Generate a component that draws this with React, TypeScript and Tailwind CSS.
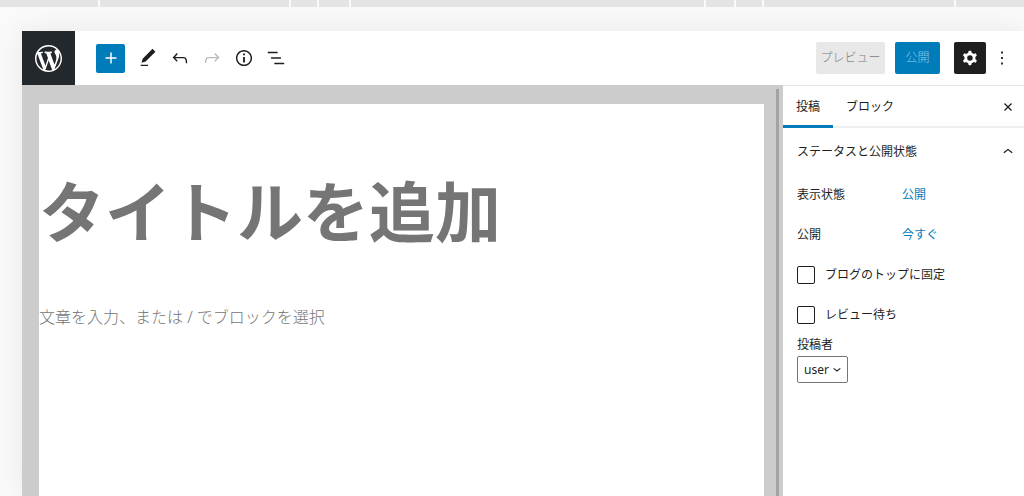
import type { ReactNode } from "react";

function Icon({ d, className = "size-[22px]" }: { d: string; className?: string }) {
  return (
    <svg viewBox="0 0 24 24" className={className} fill="currentColor" fillRule="evenodd" aria-hidden="true">
      <path d={d} />
    </svg>
  );
}

const paths = {
  plus: "M18 11.2h-5.2V6h-1.6v5.2H6v1.6h5.2V18h1.6v-5.2H18z",
  edit: "M20.1 5.1L16.9 2 6.2 12.7l-1.3 4.4 4.5-1.3L20.1 5.1zM4 20.8h8v-1.5H4v1.5z",
  undo: "M18.3 11.7c-.6-.6-1.4-.9-2.3-.9H6.7l2.9-3.3-1.1-1-4.5 5L8.5 16l1-1-2.7-2.7H16c.5 0 .9.2 1.3.5 1 1 1 3.4 1 4.5v.3h1.5v-.2c0-1.5 0-4.3-1.5-5.7z",
  redo: "M15.6 6.5l-1.1 1 2.9 3.3H8c-.9 0-1.7.3-2.3.9-1.4 1.5-1.4 4.2-1.4 5.6v.2h1.5v-.3c0-1.1 0-3.5 1-4.5.3-.3.7-.5 1.3-.5h9.2L14.5 15l1.1 1.1 4.6-4.6-4.6-5z",
  info: "M12 3.2c-4.8 0-8.8 3.9-8.8 8.8 0 4.8 3.9 8.8 8.8 8.8 4.8 0 8.8-3.9 8.8-8.8 0-4.8-4-8.8-8.8-8.8zm0 16c-4 0-7.2-3.3-7.2-7.2C4.8 8 8 4.8 12 4.8s7.2 3.3 7.2 7.2c0 4-3.2 7.2-7.2 7.2zM11 17h2v-6h-2v6zm0-8h2V7h-2v2z",
  list: "M13.8 5.2H3v1.5h10.8V5.2zm-3.6 12v1.5H21v-1.5H10.2zm7.2-6H6.6v1.5h10.8v-1.5z",
  cog: "M10.289 4.836A1 1 0 0111.275 4h1.306a1 1 0 01.987.836l.244 1.466c.787.26 1.503.679 2.108 1.218l1.393-.522a1 1 0 011.216.437l.653 1.13a1 1 0 01-.23 1.273l-1.148.944a6.025 6.025 0 010 2.435l1.149.946a1 1 0 01.23 1.272l-.653 1.13a1 1 0 01-1.216.437l-1.394-.522c-.605.54-1.32.958-2.108 1.218l-.244 1.466a1 1 0 01-.987.836h-1.306a1 1 0 01-.986-.836l-.244-1.466a5.995 5.995 0 01-2.108-1.218l-1.394.522a1 1 0 01-1.217-.436l-.653-1.131a1 1 0 01.23-1.272l1.149-.946a6.026 6.026 0 010-2.435l-1.148-.944a1 1 0 01-.23-1.272l.653-1.131a1 1 0 011.217-.437l1.393.522a5.994 5.994 0 012.108-1.218l.244-1.466zM14.929 12a3 3 0 11-6 0 3 3 0 016 0z",
  more: "M13 19h-2v-2h2v2zm0-6h-2v-2h2v2zm0-6h-2V5h2v2z",
  close: "M12 13.06l3.712 3.713 1.061-1.06L13.061 12l3.712-3.712-1.06-1.06L12 10.938 8.288 7.227l-1.061 1.06L10.939 12l-3.712 3.712 1.06 1.061L12 13.061z",
  chevronUp: "M6.5 12.4L12 8l5.5 4.4-.9 1.2L12 10l-4.5 3.6-1-1.2z",
  chevronDown: "M17.5 11.6L12 16l-5.5-4.4.9-1.2L12 14l4.5-3.6 1 1.2z",
};

function WordPressLogo() {
  return (
    <svg viewBox="0 0 20 20" className="size-[27px]" fill="currentColor" aria-hidden="true">
      <path d="M20 10c0-5.51-4.49-10-10-10C4.48 0 0 4.49 0 10c0 5.52 4.48 10 10 10 5.51 0 10-4.48 10-10zM7.78 15.37L4.37 6.22c.55-.02 1.17-.08 1.17-.08.5-.06.44-1.13-.06-1.11 0 0-1.45.11-2.37.11-.18 0-.37 0-.58-.01C4.12 2.69 6.87 1.11 10 1.11c2.33 0 4.45.87 6.05 2.34-.68-.11-1.65.39-1.65 1.58 0 .74.45 1.36.9 2.1.35.61.55 1.36.55 2.46 0 1.49-1.4 5-1.4 5l-3.03-8.37c.54-.02.82-.17.82-.17.5-.05.44-1.25-.06-1.22 0 0-1.44.12-2.38.12-.87 0-2.33-.12-2.33-.12-.5-.03-.56 1.2-.06 1.22l.92.08 1.26 3.41zM17.41 10c.24-.64.74-1.87.43-4.25.7 1.29 1.05 2.71 1.05 4.25 0 3.29-1.73 6.24-4.4 7.78.97-2.59 1.94-5.2 2.92-7.78zM6.1 18.09C3.12 16.65 1.11 13.53 1.11 10c0-1.3.23-2.48.72-3.59C3.25 10.3 4.67 14.2 6.1 18.09zm4.03-6.63l2.58 6.98c-.86.29-1.76.45-2.71.45-.79 0-1.57-.11-2.29-.33.81-2.38 1.62-4.74 2.42-7.1z" />
    </svg>
  );
}

function ToolButton({ label, d, disabled = false }: { label: string; d: string; disabled?: boolean }) {
  return (
    <button
      type="button"
      aria-label={label}
      disabled={disabled}
      className="flex size-8 items-center justify-center text-[#1e1e1e] disabled:text-[#bbbbbb]"
    >
      <Icon d={d} />
    </button>
  );
}

function SettingRow({ label, value }: { label: string; value: string }) {
  return (
    <div className="flex h-10 items-center">
      <dt className="w-[105px]">{label}</dt>
      <dd>
        <button type="button" className="text-[#007cba]">{value}</button>
      </dd>
    </div>
  );
}

function CheckRow({ children }: { children: ReactNode }) {
  return (
    <label className="flex h-10 items-center gap-[10px]">
      <input type="checkbox" className="size-[18px] appearance-none rounded-xs border border-[#1e1e1e] bg-white" />
      {children}
    </label>
  );
}

function TopStrip() {
  return (
    <div className="flex h-[7px] shrink-0 gap-[2px] bg-[#fafafa]" aria-hidden="true">
      <div className="w-[98px] bg-[#e4e4e4]" />
      <div className="w-[189px] bg-[#e4e4e4]" />
      <div className="w-[26px] bg-[#e4e4e4]" />
      <div className="w-[30px] bg-[#e4e4e4]" />
      <div className="flex-1 bg-[#e4e4e4]" />
      <div className="w-[28px] bg-[#e4e4e4]" />
      <div className="w-[26px] bg-[#e4e4e4]" />
      <div className="w-[190px] bg-[#e4e4e4]" />
      <div className="w-[68px] bg-[#e4e4e4]" />
    </div>
  );
}

function Header() {
  return (
    <header className="flex h-[54px] shrink-0 items-center bg-white">
      <a href="#" aria-label="WordPress" className="flex h-full w-[53px] items-center justify-center bg-[#23282d] text-white">
        <WordPressLogo />
      </a>
      <div className="flex flex-1 items-center pl-[21px]">
        <button type="button" aria-label="ブロックを追加" className="mr-[7px] flex size-[29px] items-center justify-center rounded-xs bg-[#007cba] text-white">
          <Icon d={paths.plus} />
        </button>
        <ToolButton label="ツール" d={paths.edit} />
        <ToolButton label="元に戻す" d={paths.undo} />
        <ToolButton label="やり直し" d={paths.redo} disabled />
        <ToolButton label="詳細" d={paths.info} />
        <ToolButton label="リスト表示" d={paths.list} />
      </div>
      <div className="flex items-center pr-3">
        <button type="button" disabled className="h-8 w-[69px] rounded-xs bg-[#e8e8e8] text-[#7c7c7c]">プレビュー</button>
        <button type="button" disabled className="ml-[10px] h-8 w-[45px] rounded-xs bg-[#007cba] text-[#8cc8e6]">公開</button>
        <button type="button" aria-label="設定" className="ml-[14px] flex size-8 items-center justify-center rounded-xs bg-[#1e1e1e] text-white">
          <Icon d={paths.cog} />
        </button>
        <button type="button" aria-label="オプション" className="ml-[6px] flex h-8 w-5 items-center justify-center text-[#1e1e1e]">
          <Icon d={paths.more} className="size-[22px] shrink-0" />
        </button>
      </div>
    </header>
  );
}

function Sidebar() {
  return (
    <aside className="w-[241px] shrink-0 border-t border-[#e4e4e4] bg-white font-normal">
      <div className="flex h-[42px] items-stretch border-b-2 border-[#eeeeee]">
        <button type="button" className="-mb-[2px] w-[50px] border-b-3 border-[#007cba] pt-[2px]">投稿</button>
        <button type="button" className="px-[13px] pt-[2px]">ブロック</button>
        <button type="button" aria-label="設定を閉じる" className="mr-[6px] ml-auto pt-[2px]">
          <Icon d={paths.close} className="size-5" />
        </button>
      </div>
      <section className="pt-[1px] pr-[6px] pl-[14px]">
        <h2>
          <button type="button" className="flex h-[46px] w-full items-center justify-between">
            ステータスと公開状態
            <Icon d={paths.chevronUp} className="size-5" />
          </button>
        </h2>
        <dl>
          <SettingRow label="表示状態" value="公開" />
          <SettingRow label="公開" value="今すぐ" />
        </dl>
        <CheckRow>ブログのトップに固定</CheckRow>
        <CheckRow>レビュー待ち</CheckRow>
        <label htmlFor="author" className="block leading-5">投稿者</label>
        <div className="relative mt-[1px] w-[51px]">
          <select id="author" className="h-[27px] w-full appearance-none rounded-xs border border-[#757575] bg-white pl-[6px]">
            <option>user</option>
          </select>
          <Icon d={paths.chevronDown} className="pointer-events-none absolute top-[5px] right-[3px] size-4" />
        </div>
      </section>
    </aside>
  );
}

export default function App() {
  return (
    <div className="flex min-h-screen flex-col overflow-hidden bg-[#fafafa] font-['Noto_Sans','Noto_Sans_CJK_JP',sans-serif] text-[12px] font-light text-[#1e1e1e]">
      <TopStrip />
      <div className="mt-6 ml-[22px] flex flex-1 flex-col shadow-[0_0_28px_rgba(0,0,0,0.08)]">
        <Header />
        <div className="flex flex-1">
          <main className="flex min-w-0 flex-1 bg-[#cccccc] pt-[19px] pl-[17px]">
            <div className="min-w-0 flex-1 bg-white">
              <input
                type="text"
                aria-label="タイトル"
                placeholder="タイトルを追加"
                className="mt-[57px] block h-[100px] w-full text-[66px] font-bold placeholder:text-[#757575] placeholder:opacity-100"
              />
              <input
                type="text"
                aria-label="本文"
                placeholder="文章を入力、または / でブロックを選択"
                className="mt-[40px] block h-8 w-full text-[16px] placeholder:text-[#757575]"
              />
            </div>
            <div className="-mt-[15px] ml-3 w-[3px] bg-[#a3a3a3]" />
            <div className="w-1" />
          </main>
          <Sidebar />
        </div>
      </div>
    </div>
  );
}
